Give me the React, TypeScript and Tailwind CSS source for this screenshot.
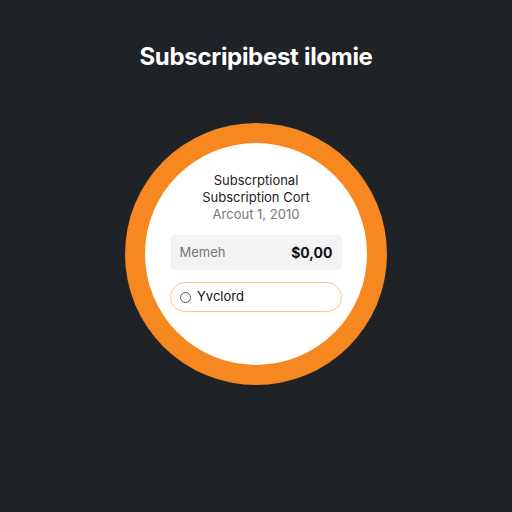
export default function App(): JSX.Element {
  return (
    <div className="flex h-[512px] w-[512px] flex-col items-center bg-[#1f2227] pt-[43px] font-['Inter',sans-serif]">
      <h1 className="text-[24px] font-bold leading-[28px] tracking-[-0.3px] text-white">Subscripibest ilomie</h1>
      <div className="mt-[52px] h-[262px] w-[262px] rounded-full bg-[#f7871f] p-[20px]">
        <div className="flex h-full w-full flex-col items-center rounded-full bg-white pt-[28px]">
          <p className="text-[13px] leading-[18px] text-[#222]">Subscrptional</p>
          <p className="text-[13px] leading-[17px] text-[#222]">Subscription Cort</p>
          <p className="text-[13px] leading-[17px] text-[#777]">Arcout 1, 2010</p>
          <div className="mt-[12px] flex h-[35px] w-[171px] items-center justify-between rounded-[4px] bg-[#f3f3f3] px-[9px]">
            <span className="text-[13px] text-[#777]">Memeh</span>
            <span className="text-[14px] font-bold text-[#111]">$0,00</span>
          </div>
          <div className="mt-[12px] flex h-[30px] w-[172px] items-center gap-[6px] rounded-full border border-[#f6c98e] px-[9px]">
            <span className="h-[11px] w-[11px] rounded-full border border-[#555]" />
            <span className="text-[13px] text-[#111]">Yvclord</span>
          </div>
        </div>
      </div>
    </div>
  );
}
